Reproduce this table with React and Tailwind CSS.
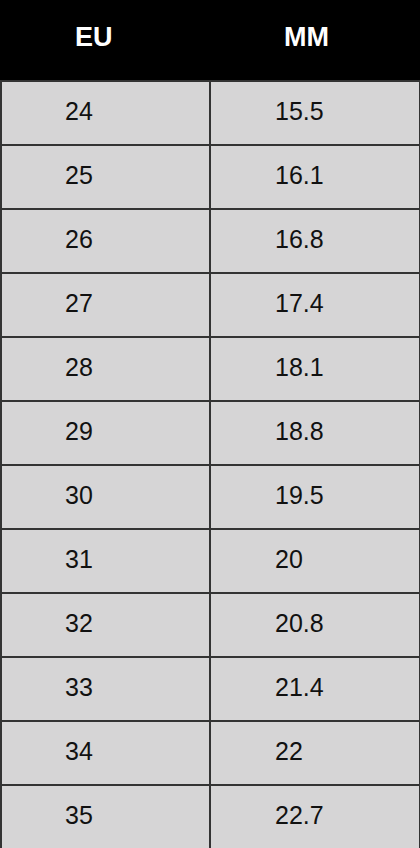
import { Fragment } from "react"

const rows = [
  ["24", "15.5"],
  ["25", "16.1"],
  ["26", "16.8"],
  ["27", "17.4"],
  ["28", "18.1"],
  ["29", "18.8"],
  ["30", "19.5"],
  ["31", "20"],
  ["32", "20.8"],
  ["33", "21.4"],
  ["34", "22"],
  ["35", "22.7"],
]

export default function App() {
  return (
    <div className="w-[420px] h-[848px] overflow-hidden font-['Liberation_Sans',Arial,sans-serif]">
      <div className="h-[80px] bg-black grid grid-cols-[207px_1fr] gap-[2px] pl-[2px] pr-[1px]">
        <div className="flex items-center pl-[73px] pb-[5px] text-white font-bold text-[27px]">EU</div>
        <div className="flex items-center pl-[73px] pb-[5px] text-white font-bold text-[27px]">MM</div>
      </div>
      <div className="bg-[#333333] grid grid-cols-[207px_1fr] gap-[2px] pt-[2px] pl-[2px] pr-[1px] pb-[2px]">
        {rows.map(([eu, mm]) => (
          <Fragment key={eu}>
            <div className="h-[62px] bg-[#d6d5d6] flex items-center pl-[63px] pb-[2px] text-[25px] text-[#111]">{eu}</div>
            <div className="h-[62px] bg-[#d6d5d6] flex items-center pl-[64px] pb-[2px] text-[25px] text-[#111]">{mm}</div>
          </Fragment>
        ))}
      </div>
    </div>
  )
}
